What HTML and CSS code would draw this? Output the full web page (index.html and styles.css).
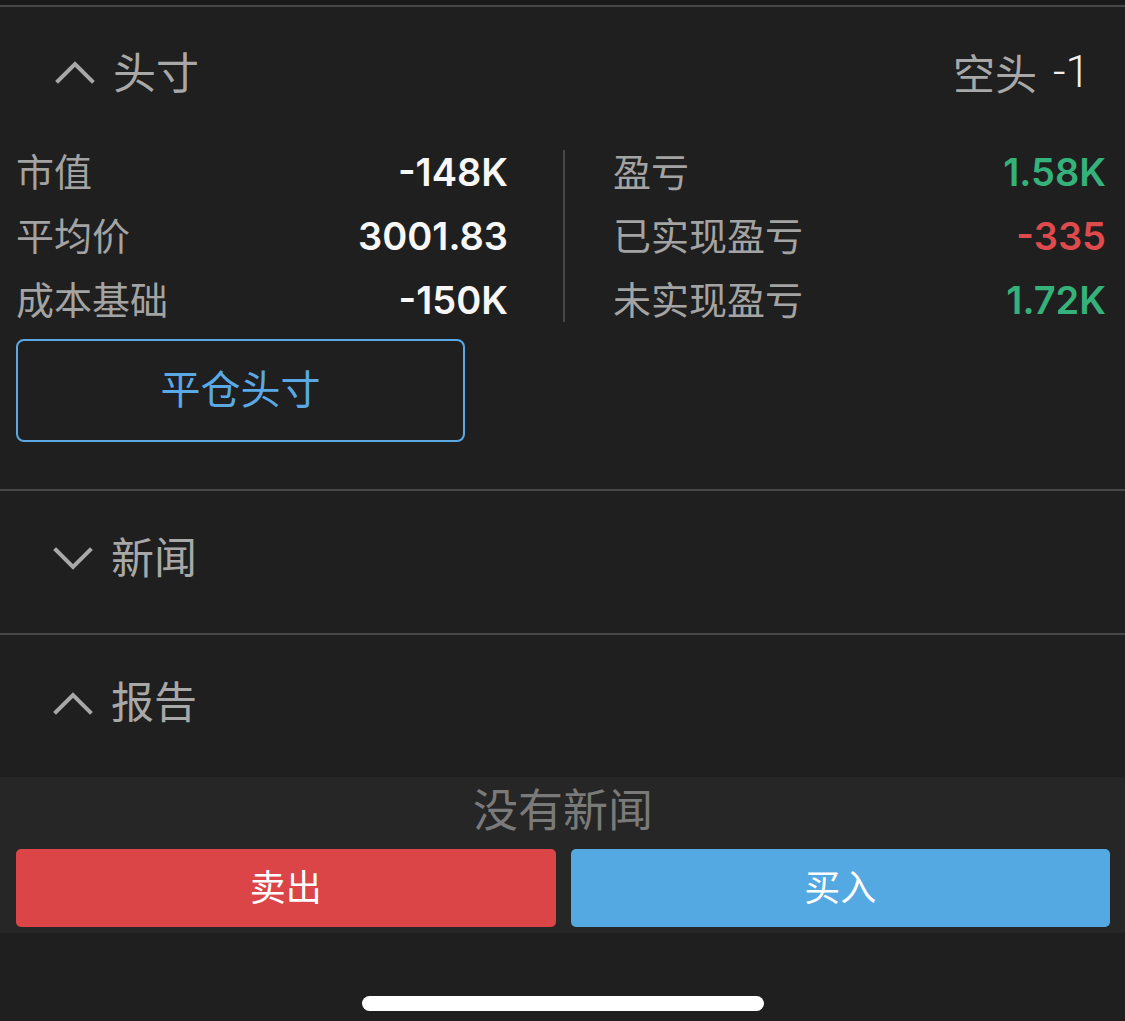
FILE: index.html
```html
<!DOCTYPE html>
<html lang="zh-CN">
<head>
  <meta charset="UTF-8" />
  <title>头寸</title>
  <meta name="viewport" content="width=device-width, initial-scale=1.0" />
  <link rel="stylesheet" href="styles.css">
</head>
<body>
  <div class="top-strip"></div>

  <!-- Position -->
  <section class="panel">
    <div class="panel-head head-position">
      <div class="head-left">
        <svg class="chev" width="40" height="24" viewBox="0 0 40 24"><polyline points="3,21 20,4 37,21" /></svg>
        <span class="head-title">头寸</span>
      </div>
      <div class="head-right">
        <span class="side">空头</span>
        <span class="qty">-1</span>
      </div>
    </div>

    <div class="stats">
      <div class="stat-col left">
        <div class="stat-row"><span class="label">市值</span><span class="value">-148K</span></div>
        <div class="stat-row"><span class="label">平均价</span><span class="value">3001.83</span></div>
        <div class="stat-row"><span class="label">成本基础</span><span class="value">-150K</span></div>
      </div>
      <div class="stat-divider"></div>
      <div class="stat-col right">
        <div class="stat-row"><span class="label">盈亏</span><span class="value up">1.58K</span></div>
        <div class="stat-row"><span class="label">已实现盈亏</span><span class="value down">-335</span></div>
        <div class="stat-row"><span class="label">未实现盈亏</span><span class="value up">1.72K</span></div>
      </div>
    </div>

    <button class="close-position">平仓头寸</button>
  </section>

  <!-- News -->
  <section class="panel">
    <div class="panel-head">
      <div class="head-left">
        <svg class="chev" width="40" height="24" viewBox="0 0 40 24"><polyline points="3,3 20,20 37,3" /></svg>
        <span class="head-title">新闻</span>
      </div>
    </div>
  </section>

  <!-- Reports -->
  <section class="panel last">
    <div class="panel-head">
      <div class="head-left">
        <svg class="chev" width="40" height="24" viewBox="0 0 40 24"><polyline points="3,21 20,4 37,21" /></svg>
        <span class="head-title">报告</span>
      </div>
    </div>
  </section>

  <div class="trade-bar">
    <div class="empty-note">没有新闻</div>
    <div class="trade-buttons">
      <button class="trade-btn sell">卖出</button>
      <button class="trade-btn buy">买入</button>
    </div>
  </div>

  <div class="home-area">
    <div class="home-indicator"></div>
  </div>
</body>
</html>
```

FILE: styles.css
```css
body {
  margin: 0;
  background-color: #1f1f1f;
  color: #a6a6a6;
  font-family: "Noto Sans CJK SC", "Noto Sans", sans-serif;
  width: 1125px;
  height: 1021px;
  overflow: hidden;
}

.top-strip {
  height: 5px;
  background-color: #1a1a1a;
  border-bottom: 2px solid #474747;
}

.panel {
  border-bottom: 2px solid #474747;
}

.panel.last {
  border-bottom: none;
}

.panel-head {
  display: flex;
  align-items: center;
  justify-content: space-between;
  height: 142px;
  box-sizing: border-box;
  padding: 0 35px 6px 53px;
}

.head-position {
  height: 133px;
  padding-bottom: 4px;
  padding-left: 55px;
}

.head-left {
  display: flex;
  align-items: center;
  gap: 18px;
}

.chev {
  display: block;
}

.chev polyline {
  fill: none;
  stroke: #a8a8a8;
  stroke-width: 4;
  stroke-linecap: square;
}

.head-title {
  font-size: 43px;
  line-height: 1;
  color: #a8a8a8;
  margin-top: -8px;
}

.head-position .head-title {
  margin-top: -2px;
}

.head-right {
  display: flex;
  align-items: center;
  gap: 16px;
}

.side {
  font-size: 42px;
  line-height: 1;
  color: #a8a8a8;
}

.qty {
  font-family: "Roboto", sans-serif;
  font-weight: 300;
  font-size: 44px;
  line-height: 1;
  color: #f0f0f0;
}

.stats {
  display: flex;
  padding: 0 19px 0 16px;
}

.stat-col {
  width: 492px;
}

.stat-col.right {
  width: 493px;
}

.stat-divider {
  width: 2px;
  margin: 10px 48px 10px 55px;
  background-color: #474747;
}

.stat-row {
  display: flex;
  align-items: center;
  justify-content: space-between;
  height: 64px;
}

.label {
  font-size: 38px;
  line-height: 1;
  color: #a3a3a3;
  margin-top: -4px;
}

.value {
  font-family: "Inter", "Roboto", sans-serif;
  font-weight: 600;
  font-size: 38px;
  color: #f7f7f7;
}

.value.up {
  color: #35b17b;
}

.value.down {
  color: #df4a4c;
}

.close-position {
  display: block;
  margin: 7px 0 47px 16px;
  width: 449px;
  height: 103px;
  padding: 0 0 7px;
  border: 2px solid #5aa9e4;
  border-radius: 8px;
  background-color: transparent;
  color: #5aa9e4;
  font-family: "Noto Sans CJK SC", sans-serif;
  font-size: 40px;
  cursor: pointer;
}

.trade-bar {
  background-color: #262626;
  height: 156px;
  padding: 0 15px 0 16px;
}

.empty-note {
  text-align: center;
  font-size: 45px;
  line-height: 1;
  color: #7a7a7a;
  padding-top: 8px;
  height: 64px;
  box-sizing: border-box;
}

.trade-buttons {
  display: flex;
  gap: 15px;
  margin-top: 8px;
}

.trade-btn {
  flex: 1;
  height: 78px;
  padding: 0 0 6px;
  border: none;
  border-radius: 5px;
  color: #ffffff;
  font-family: "Noto Sans CJK SC", sans-serif;
  font-size: 36px;
  cursor: pointer;
}

.trade-btn.sell {
  background-color: #db4548;
}

.trade-btn.buy {
  background-color: #55a9e2;
}

.home-area {
  display: flex;
  justify-content: center;
  padding-top: 63px;
}

.home-indicator {
  width: 402px;
  height: 15px;
  border-radius: 8px;
  background-color: #ffffff;
}
```
